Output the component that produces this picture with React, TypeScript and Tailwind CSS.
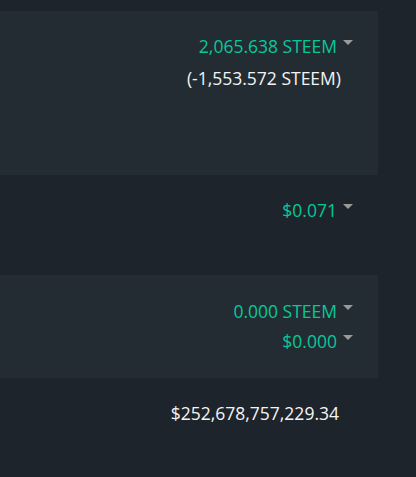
import React from 'react';

const Caret: React.FC = () => (
    <span className="ml-[6px] mr-[3px] inline-block w-0 h-0 border-l-[5px] border-r-[5px] border-t-[5px] border-l-transparent border-r-transparent border-t-[#9a9a9a] relative top-[-4px]" />
);

const Amount: React.FC<{ value: string }> = ({ value }) => (
    <div className="flex items-center justify-end h-6">
        <span className="text-[#07c89b]">{value}</span>
        <Caret />
    </div>
);

const Plain: React.FC<{ value: string }> = ({ value }) => (
    <div className="flex items-center justify-end h-6 pr-[15px] text-[#f4f4f4]">{value}</div>
);

const App: React.FC = () => {
    return (
        <div className="min-h-[477px] bg-[#1e242b] pt-[11px] text-[17.5px] font-['Open_Sans','Lato',sans-serif]">
            {/* balance */}
            <div className="w-[378px] h-[164px] bg-[#232c32] pt-[23px] pr-[22px] flex flex-col gap-2">
                <Amount value="2,065.638 STEEM" />
                <Plain value="(-1,553.572 STEEM)" />
            </div>

            {/* price */}
            <div className="w-[378px] h-[100px] pt-[23px] pr-[22px]">
                <Amount value="$0.071" />
            </div>

            {/* rewards */}
            <div className="w-[378px] h-[103px] bg-[#232c32] pt-[24px] pr-[22px] flex flex-col gap-[6px]">
                <Amount value="0.000 STEEM" />
                <Amount value="$0.000" />
            </div>

            {/* total */}
            <div className="w-[378px] pt-[23px] pr-[22px]">
                <div className="flex items-center justify-end h-6 pr-[17px] text-[#f4f4f4]">$252,678,757,229.34</div>
            </div>
        </div>
    );
};

export default App;
